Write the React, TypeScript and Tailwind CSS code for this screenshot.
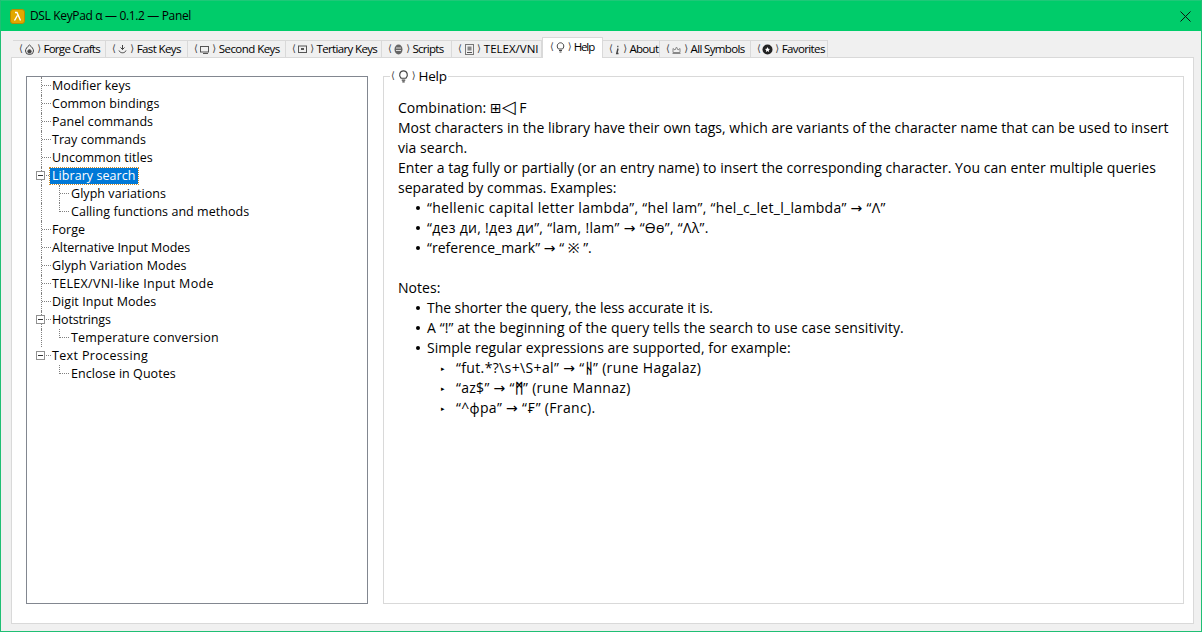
import React from "react";

const F = "font-['Open_Sans','Noto_Sans','DejaVu_Sans',sans-serif]";

const Ic = ({ children, big, narrow }: { children: React.ReactNode; big?: boolean; narrow?: boolean }) => (
  <svg
    width={big ? 13 : narrow ? 7 : 11}
    height={big ? 13 : 11}
    viewBox={narrow ? "2 0 7 11" : "0 0 11 11"}
    fill="none"
    stroke="#444"
    strokeWidth="1"
    className="shrink-0"
  >
    {children}
  </svg>
);

const glyph = (id: string) => {
  switch (id) {
    case "forge":
      return <><path d="M5.5 1 C3 3 1.5 5 1.5 7 a4 3.5 0 0 0 8 0 C9.5 5 8 3 5.5 1Z" /><circle cx="5.5" cy="7.4" r="1.7" fill="#444" /></>;
    case "fast":
      return <><path d="M5.5 1v4.5M3.5 3.5l2 2 2-2" /><path d="M2 6.5c1 3 6 3 7 0" /></>;
    case "second":
      return <><rect x="1.5" y="2.5" width="8" height="5.5" stroke="#555" /><path d="M4 9.5h5" stroke="#555" /></>;
    case "third":
      return <><rect x="1.5" y="2" width="8" height="6.5" stroke="#555" /><rect x="4" y="4" width="3" height="2" fill="#555" stroke="none" /></>;
    case "scripts":
      return <><ellipse cx="5.5" cy="5.5" rx="4" ry="5" fill="#666" stroke="none" /><path d="M3 4h5M3 6.5h5" stroke="#ddd" /></>;
    case "telex":
      return <><rect x="1.5" y="0.5" width="8" height="10" stroke="#777" /><rect x="3.5" y="2.5" width="4" height="4" fill="#888" stroke="none" /><path d="M3 8.5h5" stroke="#555" /></>;
    case "help":
      return <><path d="M3.5 7 C1 4.5 2.5 0.8 5.5 0.8 S10 4.5 7.5 7Z" /><path d="M4 8.5h3M4.5 10h2" /></>;
    case "about":
      return <><path d="M5.2 2.5h1.2" strokeWidth="1.6" /><path d="M6 4.5 L4.8 9.5 H6.5" strokeWidth="1.5" /></>;
    case "sym":
      return <><path d="M1.5 9.5h8M2 8.5v-4l2 1.5 1.5-3 1.5 3 2-1.5v4z" stroke="#888" /></>;
    default:
      return <><circle cx="5.5" cy="5.5" r="5" fill="#222" stroke="none" /><path d="M5.5 3l.8 1.7 1.8.2-1.3 1.2.3 1.8-1.6-.9-1.6.9.3-1.8L2.9 4.9l1.8-.2z" fill="#fff" stroke="none" /></>;
  }
};

const Angled = ({ icon, big }: { icon: string; big?: boolean }) => (
  <span className="flex items-center gap-[2px] text-[#444] shrink-0">
    <span className="text-[10px] leading-none font-['DejaVu_Sans',sans-serif]">⟨</span>
    <Ic big={big} narrow={icon === "about"}>{glyph(icon)}</Ic>
    <span className="text-[10px] leading-none font-['DejaVu_Sans',sans-serif]">⟩</span>
  </span>
);

const tabs = [
  { icon: "forge", label: "Forge Crafts", w: "w-[93px] tracking-[-0.7px]" },
  { icon: "fast", label: "Fast Keys", w: "w-[82px] tracking-[-0.6px]" },
  { icon: "second", label: "Second Keys", w: "w-[98px] tracking-[-0.55px]" },
  { icon: "third", label: "Tertiary Keys", w: "w-[96px] tracking-[-0.65px]" },
  { icon: "scripts", label: "Scripts", w: "w-[70px] tracking-[-0.7px]" },
  { icon: "telex", label: "TELEX/VNI", w: "w-[90px] tracking-[0px]" },
  { icon: "help", label: "Help", w: "w-[61px] tracking-[-1.1px]", active: true },
  { icon: "about", label: "About", w: "w-[57px] tracking-[-0.7px]" },
  { icon: "sym", label: "All Symbols", w: "w-[91px] tracking-[-0.65px]" },
  { icon: "fav", label: "Favorites", w: "w-[77px] tracking-[-0.6px]" },
];

const Dot = "border-[#808080] border-dotted";

type Row = { t: string; kind: "leaf" | "open" | "sub"; last?: boolean; sel?: boolean; noLine?: boolean; lastTop?: boolean; tr?: string };
const rows: Row[] = [
  { t: "Modifier keys", kind: "leaf" },
  { t: "Common bindings", kind: "leaf" },
  { t: "Panel commands", kind: "leaf" },
  { t: "Tray commands", kind: "leaf" },
  { t: "Uncommon titles", kind: "leaf" },
  { t: "Library search", kind: "open", sel: true },
  { t: "Glyph variations", kind: "sub" },
  { t: "Calling functions and methods", kind: "sub", last: true },
  { t: "Forge", kind: "leaf" },
  { t: "Alternative Input Modes", kind: "leaf", tr: "tracking-[-0.08px]" },
  { t: "Glyph Variation Modes", kind: "leaf", tr: "tracking-[0.12px]" },
  { t: "TELEX/VNI-like Input Mode", kind: "leaf", tr: "tracking-[0.3px]" },
  { t: "Digit Input Modes", kind: "leaf" },
  { t: "Hotstrings", kind: "open", tr: "tracking-[-0.15px]" },
  { t: "Temperature conversion", kind: "sub", last: true, tr: "tracking-[0.2px]" },
  { t: "Text Processing", kind: "open", lastTop: true, tr: "tracking-[0.35px]" },
  { t: "Enclose in Quotes", kind: "sub", last: true, noLine: true },
];

const TreeRow = ({ r }: { r: Row }) => (
  <div className="flex h-[18px] items-stretch">
    <div className="w-[24px] shrink-0 pl-[14px] flex">
      <div className={`w-[10px] flex flex-col ${r.noLine ? "" : `border-l ${Dot}`} ${r.lastTop ? "border-l-0" : ""}`}>
        {r.kind !== "sub" && <div className={`h-[9px] border-b ${Dot}`} />}
      </div>
    </div>
    {r.kind === "sub" ? (
      <div className="flex items-stretch">
        <div className="w-[20px] shrink-0 pl-[8px] flex">
          <div className={`w-[10px] ${r.last ? "h-[9px]" : ""} border-l ${Dot}`}>
            <div className={`h-[9px] border-b ${Dot}`} />
          </div>
        </div>
        <span className={`ml-[-1px] self-center px-[1px] leading-[16px] whitespace-nowrap ${r.tr ?? ""}`}>{r.t}</span>
      </div>
    ) : (
      <span
        className={`self-center ml-[-1px] px-[2px] leading-[16px] whitespace-nowrap ${r.tr ?? ""} ${
          r.sel ? "bg-[#0078d7] text-white outline outline-dotted outline-[#c98a2a] pr-[3px]" : ""
        }`}
      >
        {r.t}
      </span>
    )}
  </div>
);

const Box = () => (
  <span className="inline-flex w-[9px] h-[9px] border border-[#919191] bg-white items-center justify-center">
    <span className="w-[5px] h-[1px] bg-[#333]" />
  </span>
);

const Bullet = ({ children, tr }: { children: React.ReactNode; tr?: string }) => (
  <div className="flex h-[20px] items-center pl-[18px] whitespace-nowrap">
    <span className="w-[4px] h-[4px] mr-[7px] shrink-0 rounded-full bg-black" />
    <span className={tr}>{children}</span>
  </div>
);
const SubBullet = ({ children, tr }: { children: React.ReactNode; tr?: string }) => (
  <div className="flex h-[20px] items-center pl-[43px] whitespace-nowrap">
    <span className="w-[15px] shrink-0 text-[7px] leading-none">▸</span>
    <span className={tr}>{children}</span>
  </div>
);
const Line = ({ children }: { children?: React.ReactNode }) => (
  <div className="h-[20px] leading-[20px] whitespace-nowrap">{children}</div>
);

export default function App() {
  return (
    <div className={`w-[1202px] h-[632px] flex flex-col border border-t-0 border-[#1fbf74] bg-[#f0f0f0] overflow-hidden text-black ${F}`}>
      <div className="h-[31px] shrink-0 -mx-px bg-[#00cc6a] border-t border-[#1fc878] flex items-center pl-[10px] pr-[11px]">
        <svg width="15" height="15" viewBox="0 0 15 15" className="shrink-0">
          <rect x="0.5" y="0.5" width="14" height="14" rx="2.5" fill="#e2a800" stroke="#b98a00" />
          <path d="M5 3.5 L7 3.5 L10.5 11.5 M7.4 6.5 L4.5 11.5" fill="none" stroke="#fff" strokeWidth="1.4" />
        </svg>
        <span className="ml-[5px] text-[12px] tracking-[-0.35px]">DSL KeyPad α — 0.1.2 — Panel</span>
        <svg width="11" height="11" viewBox="0 0 11 11" className="ml-auto">
          <path d="M0.5 0.5L10.5 10.5M10.5 0.5L0.5 10.5" stroke="#111" strokeWidth="1" />
        </svg>
      </div>

      <div className="flex-1 flex flex-col pl-[10px] pr-[7px] pb-[7px]">
        <div className="flex h-[26px] items-end pl-[2px] shrink-0">
          {tabs.map((t) => (
            <div
              key={t.label}
              className={`${t.w} shrink-0 flex items-center pl-[6px] gap-[3px] text-[11.5px] whitespace-nowrap border-[#d9d9d9] border-t border-r ${
                t.active
                  ? "h-[21px] bg-white border-l relative top-px pb-[2px] pl-[7px]"
                  : "h-[17px] bg-[#f0f0f0]"
              }`}
            >
              <Angled icon={t.icon} />
              <span>{t.label}</span>
            </div>
          ))}
        </div>
        <div className="flex-1 bg-white border border-[#d9d9d9] flex gap-[15px] pl-[14px] pr-[9px] pt-[18px] pb-[19px]">
          <div className="w-[342px] shrink-0 border border-[#828790] text-[12.5px] tracking-[0.05px]">
            {rows.map((r) => (
              <div key={r.t} className="relative">
                <TreeRow r={r} />
                {r.kind === "open" && (
                  <span className="absolute left-[9px] top-[4px] flex">
                    <Box />
                  </span>
                )}
              </div>
            ))}
          </div>
          <fieldset className="flex-1 border border-[#d9d9d9] px-[14px] pt-[13px] -mt-[9px]">
            <legend className="ml-[-8px] px-[1px] flex items-center gap-[3px] text-[13.5px] tracking-[-0.2px] h-[18px]">
              <Angled icon="help" big />
              <span>Help</span>
            </legend>
            <div className="text-[14px] tracking-[0.03px] leading-[20px]">
              <Line>
                Combination: ⊞<span className="text-[18px] leading-[0]">◁</span> F
              </Line>
              <Line>Most characters in the library have their own tags, which are variants of the character name that can be used to insert</Line>
              <Line>via search.</Line>
              <Line>Enter a tag fully or partially (or an entry name) to insert the corresponding character. You can enter multiple queries</Line>
              <Line>separated by commas. Examples:</Line>
              <Bullet tr="tracking-[0.3px]">“hellenic capital letter lambda”, “hel lam”, “hel_c_let_l_lambda” → “Λ”</Bullet>
              <Bullet tr="tracking-[0.3px]">“дез ди, !дез ди”, “lam, !lam” → “Ѳѳ”, “Λλ”.</Bullet>
              <Bullet>“reference_mark” → “ ※ ”.</Bullet>
              <Line />
              <Line>Notes:</Line>
              <Bullet tr="tracking-[-0.06px]">The shorter the query, the less accurate it is.</Bullet>
              <Bullet tr="tracking-[0.1px]">A “!” at the beginning of the query tells the search to use case sensitivity.</Bullet>
              <Bullet>Simple regular expressions are supported, for example:</Bullet>
              <SubBullet tr="tracking-[0.36px]">“fut.*?\s+\S+al” → “<span className="font-bold">ᚺ</span>” (rune Hagalaz)</SubBullet>
              <SubBullet tr="tracking-[0.3px]">“az$” → “<span className="font-bold">ᛗ</span>” (rune Mannaz)</SubBullet>
              <SubBullet tr="tracking-[0.33px]">“^фра” → “₣” (Franc).</SubBullet>
            </div>
          </fieldset>
        </div>
      </div>
    </div>
  );
}
